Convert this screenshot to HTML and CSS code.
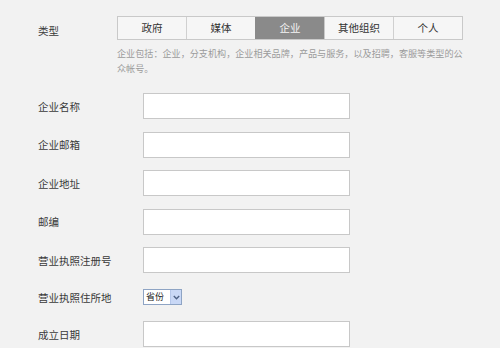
FILE: index.html
```html
<!DOCTYPE html>
<html lang="zh">
<head>
<meta charset="utf-8">
<link rel="stylesheet" href="styles.css">
</head>
<body>
<div class="page">
  <div class="type-row">
    <div class="type-label">类型</div>
    <div class="type-main">
      <div class="tabs">
        <div class="tab">政府</div>
        <div class="tab">媒体</div>
        <div class="tab active">企业</div>
        <div class="tab">其他组织</div>
        <div class="tab">个人</div>
      </div>
      <p class="desc">企业包括：企业，分支机构，企业相关品牌，产品与服务，以及招聘，客服等类型的公众帐号。</p>
    </div>
  </div>
  <div class="form">
    <div class="row"><div class="label">企业名称</div><div class="input"></div></div>
    <div class="row"><div class="label">企业邮箱</div><div class="input"></div></div>
    <div class="row"><div class="label">企业地址</div><div class="input"></div></div>
    <div class="row"><div class="label">邮编</div><div class="input"></div></div>
    <div class="row"><div class="label">营业执照注册号</div><div class="input"></div></div>
    <div class="row row-select"><div class="label">营业执照住所地</div>
      <div class="select"><span class="select-text">省份</span><span class="select-btn"><svg width="7" height="5" viewBox="0 0 7 5"><path d="M0.8 1 L3.5 3.7 L6.2 1" fill="none" stroke="#4d6185" stroke-width="1.4"/></svg></span></div>
    </div>
    <div class="row"><div class="label">成立日期</div><div class="input"></div></div>
  </div>
</div>
</body>
</html>
```
FILE: styles.css
```css
html, body {
  margin: 0;
  padding: 0;
  background: #f2f2f2;
}
body {
  font-family: "Noto Sans CJK SC", "Noto Sans", sans-serif;
  color: #3a3a3a;
  width: 500px;
  height: 348px;
  overflow: hidden;
}
.page {
  padding: 16px 0 0 38px;
}
.type-row {
  display: flex;
}
.type-label {
  width: 79px;
  font-size: 10.5px;
  line-height: 24px;
  padding-top: 3px;
}
.tabs {
  display: flex;
  width: 346px;
  height: 24px;
  border: 1px solid #c9c9c9;
  box-sizing: border-box;
  background: #f6f6f6;
}
.tab {
  flex: 1;
  font-size: 10.5px;
  line-height: 22px;
  text-align: center;
  color: #333;
  border-left: 1px solid #d0d0d0;
}
.tab:first-child {
  border-left: none;
}
.tab.active {
  background: #8a8a8a;
  color: #f4f4f4;
  border-left-color: #8a8a8a;
}
.tab.active + .tab {
  border-left-color: #c9c9c9;
}
.desc {
  margin: 6px 0 0 0;
  width: 346px;
  font-size: 9.1px;
  line-height: 15px;
  color: #9b9b9b;
}
.form {
  margin-top: 17px;
}
.row {
  display: flex;
  align-items: center;
  margin-bottom: 12.5px;
}
.label {
  width: 105px;
  font-size: 10.5px;
  color: #3a3a3a;
}
.input {
  width: 207px;
  height: 26px;
  box-sizing: border-box;
  border: 1px solid #c8c8c8;
  background: #fff;
}
.row-select {
  padding: 3.5px 0;
}
.select {
  display: flex;
  width: 39px;
  height: 16px;
  box-sizing: border-box;
  border: 1px solid #8ea4c4;
  background: #fff;
}
.select-text {
  flex: 1;
  font-size: 9px;
  line-height: 14px;
  padding-left: 2px;
  color: #222;
}
.select-btn {
  width: 10px;
  display: flex;
  align-items: center;
  justify-content: center;
  background: #c9d8f6;
  border-left: 1px solid #b5c7ea;
}
```
